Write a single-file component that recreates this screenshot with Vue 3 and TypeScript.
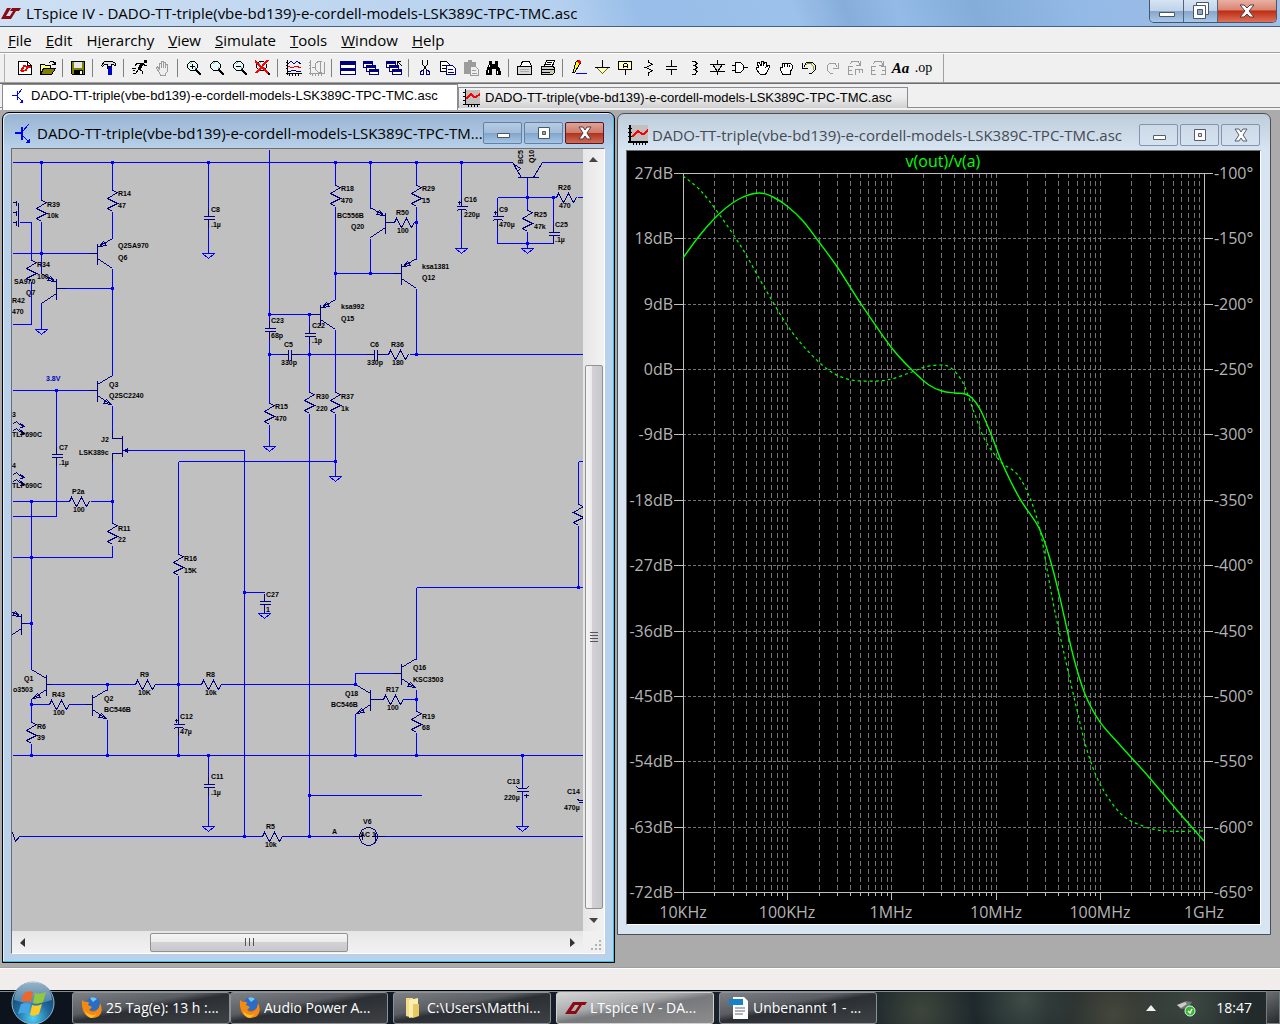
<script setup lang="ts">
interface Shape { d: string; f?: string; s?: string; w?: number }
interface Tool { name: string; art: Shape[] }
interface Label { x: number; y: number; t: string }

const fileName = 'DADO-TT-triple(vbe-bd139)-e-cordell-models-LSK389C-TPC-TMC.asc'
const shortName = fileName.slice(0, -5) + '...'

const menus = [
  ['', 'F', 'ile'], ['', 'E', 'dit'], ['H', 'i', 'erarchy'], ['', 'V', 'iew'],
  ['', 'S', 'imulate'], ['', 'T', 'ools'], ['', 'W', 'indow'], ['', 'H', 'elp'],
]

const K = '#000', N = '#000080', G = '#9c9c9c'
const lens: Shape[] = [
  { d: 'M4.5 1.5h4l3 3v3l-3 3h-4l-3-3v-3z', f: '#e8f8f8', s: K },
  { d: 'M4 4l2-2M9 9l1-2', s: '#3cc' },
  { d: 'M10 10l5 5', s: K, w: 2 },
]
const graph = (c: string): Shape[] => [{ d: 'M1.5 0v15M0 13.5h16M3.5 13v3M6.5 13v3M9.5 13v3M12.5 13v3M0 2.5h2M0 5.5h2M0 8.5h2', s: c }]
const panes: Shape[] = [
  { d: 'M.5 1.5h9v6h-9z', f: '#fff', s: N }, { d: 'M0 2.5h10', s: N, w: 2 },
  { d: 'M3.5 5.5h9v6h-9z', f: '#fff', s: N }, { d: 'M3 6.5h10', s: N, w: 2 },
  { d: 'M6.5 9.5h9v5h-9z', f: '#fff', s: N }, { d: 'M6 10.5h10', s: N, w: 2 },
]

const toolGroups: Tool[][] = [
  [
    { name: 'New schematic', art: [{ d: 'M1.5 1.5h9l4 4v9h-13z', f: '#fff', s: K }, { d: 'M10.5 1.5v4h4', s: K }, { d: 'M4 11l3-5h2M4 11h3M8 11l3-4h3M9 7h4', s: '#e00', w: 2 }] },
    { name: 'Open', art: [{ d: 'M.5 14V4.5h4l1 1h5v3', f: '#ffff80', s: K }, { d: 'M.5 14.5l3-6h12l-4 6z', f: '#808000', s: K }, { d: 'M9 3l2-2h2l2 3M12 4.5h3v-3', s: K }] },
  ],
  [{ name: 'Save', art: [{ d: 'M1.5 1.5h13v13h-12l-1-1z', f: '#808000', s: K }, { d: 'M4 2h8v6H4z', f: '#e6e6e6' }, { d: 'M4 10h9v5H4z', f: K }, { d: 'M10 11h2v3h-2z', f: '#fff' }] }],
  [{ name: 'Control panel', art: [{ d: 'M.5 5.5l3-4h8l3 2v2l-3-1h-1v2h-4v-2h-3l-2 2z', f: '#e0e0e0', s: K }, { d: 'M7 7h4v8H7z', f: '#00c' }, { d: 'M6.5 6v3', s: K }] }],
  [
    { name: 'Run', art: [{ d: 'M12 0h3v3h-3z', f: K }, { d: 'M10 4L7 9', s: K, w: 3 }, { d: 'M7 9l3 2v3M7 9l-3 4H1M4 3.5h7l2 2h2M5 3L3 6', s: K }, { d: 'M0 8.5h4M1 10.5h2', s: K }] },
    { name: 'Halt', art: [{ d: 'M4.5 13l-3-5 1-1 2 2V3.5h2V8 1.5h2V8 2.5h2V8 4.5h2V11l-2 3v1h-5z', f: '#eee', s: G }] },
  ],
  [
    { name: 'Zoom in', art: [...lens, { d: 'M4 6.5h5M6.5 4v5', s: K }] },
    { name: 'Zoom area', art: lens },
    { name: 'Zoom out', art: [...lens, { d: 'M4 6.5h5', s: K }] },
    { name: 'Zoom to fit', art: [...lens, { d: 'M0 1l13 12M13 0L1 13', s: '#f00', w: 2 }] },
  ],
  [
    { name: 'Autorange', art: [...graph(K), { d: 'M2 4l3-3 3 3 3-3 4 3', s: N }, { d: 'M2 6l4 2 4-2 5 2', s: '#f00' }, { d: 'M2 11h3l2-1 3 1h5', s: N }] },
    { name: 'Plot settings', art: [...graph(G), { d: 'M13 1.5h-4L6 4v5l3 3h4M11.5 1v12M3 7.5h4M15 1.5v11', s: G }] },
  ],
  [
    { name: 'Tile windows', art: [{ d: 'M.5 1.5h15v13H.5z', f: '#fff', s: N }, { d: 'M0 3h16M0 9h16', s: N, w: 3 }] },
    { name: 'Cascade windows', art: panes },
    { name: 'Close all windows', art: [...panes, { d: 'M11.5 5V1.5H15M12 2l4 4', s: K }] },
  ],
  [
    { name: 'Cut', art: [{ d: 'M5.5 0v4l4 6M10.5 0v4l-4 6', s: K }, { d: 'M4.5 10.5h2v4h-3v-2zM9.500 10.5h2l1 2v2h-3z', s: N }] },
    { name: 'Copy', art: [{ d: 'M.5 1.5h6l3 3v7h-9z', f: '#fff', s: K }, { d: 'M2 5.5h4M2 8.5h5', s: K }, { d: 'M6.5 5.5h6l3 3v6h-9z', f: '#fff', s: N }, { d: 'M8 9.5h5M8 12h6', s: N }] },
    { name: 'Paste', art: [{ d: 'M1 2h4V0h4v2h4v12H1z', f: G }, { d: 'M7.5 6.5h5l3 3v6h-8z', f: '#eee', s: G }, { d: 'M9 10.5h4M9 13h5', s: G }] },
    { name: 'Find', art: [{ d: 'M3 1h3v3h3V1h3v3l3 8v3h-5V9H6v6H0v-4l3-7z', f: K }, { d: 'M3.5 5v2M2 10v3M12 5v2M11.5 11v3', s: '#fff' }] },
  ],
  [
    { name: 'Print setup', art: [{ d: 'M3.5 6l2-4.500h7l2 4.5', f: '#fff', s: K }, { d: 'M.5 6.5h14v8H.5z', f: '#d8d8d8', s: K }, { d: 'M3 9h9M3 11h9', s: '#aaa' }] },
    { name: 'Print', art: [{ d: 'M4.5 6l2-5.500h8l-2 5.500z', f: '#fff', s: K }, { d: 'M7 2.5h5M6 4.5h5', s: K }, { d: 'M1.5 6.5h12l1 2v4l-2 2h-11z', f: '#ccc', s: K }, { d: 'M2 9.5h12M2 12h8', s: K }, { d: 'M10 11h2v1h-2z', f: '#cc0' }] },
  ],
  [
    { name: 'Draw wire', art: [{ d: 'M2 12L5 2l2-2 3 2-6 10z', f: '#ff0', s: K }, { d: 'M6 1l2-1 2 2-2 2z', f: '#f00' }, { d: 'M2 12l3-1-2 3z', f: K }, { d: 'M5 13.5h11', s: '#00f' }] },
    { name: 'Place ground', art: [{ d: 'M8.5 0v7', s: K }, { d: 'M2.5 7.5h12l-6 6z', f: '#ffffc0', s: '#660' }, { d: 'M1 7.5h15', s: K }] },
    { name: 'Label net', art: [{ d: 'M1.5 1.5h13v8h-13z', f: '#ffffc0', s: K }, { d: 'M6.5 8V4.500l1-1h2l1 1V8M6 6.5h4M8.5 10v5', s: K }] },
    { name: 'Resistor', art: [{ d: 'M8.5 0v2l4 2.5-7 3 7 3-4 2.5v3', s: K }] },
    { name: 'Capacitor', art: [{ d: 'M8.5 0v6M3 6.5h11M3 9.5h11M8.5 10v5', s: K }] },
    { name: 'Inductor', art: [{ d: 'M6 1.5h3l2 2-2 2H7h2l2 2-2 2H7h2l2 2-2 3H6', s: K }] },
    { name: 'Diode', art: [{ d: 'M8.5 0v15M1 4.5h15M1 11.5h15', s: K }, { d: 'M3.5 4.5h10l-5 7z', f: '#ddd', s: K }] },
    { name: 'Component', art: [{ d: 'M3.5 2.5h5l3 3v4l-3 3h-5z', f: '#fff', s: K }, { d: 'M0 5.5h3M0 10.5h3M12 7.5h4', s: K }] },
    { name: 'Move', art: [{ d: 'M5 14L1 9V7h2l1 1-2-5 2-1 2 4V1h2v5l2-4 2 1-1 4 3-2 1 1-3 6-2 3z', f: '#fff', s: K }] },
    { name: 'Drag', art: [{ d: 'M4 13L2 9V7h2V4l2-1 1 1 1-1 2 1 2-1 2 2v4l-2 3v2H4z', f: '#fff', s: K }, { d: 'M6.5 4v3M9 4v3M11.5 5v2', s: K }] },
    { name: 'Undo', art: [{ d: 'M3 7l2-4 3-1h3l3 3v5l-3 3H8M1.5 3v5H7', s: K }, { d: 'M5 5l2-1.500h3l2.500 3v3', s: '#990' }] },
    { name: 'Redo', art: [{ d: 'M13 7l-2-4H6L3 6v4l3 3h3M14.5 3v5H9', s: G }] },
    { name: 'Rotate', art: [{ d: 'M3 4l2-2.500h6l2 3M13.5 1v4H9M1.5 6v9M1 6.5h5M1 10.5h4M1 14.5h5M8.5 9v6M8 9.5h8M12 9v4M15.5 9v4', s: G }] },
    { name: 'Mirror', art: [{ d: 'M3 4l2-2.500h6l2 3M13.5 1v4H9M1.5 6v9M1 6.5h5M1 10.5h4M1 14.5h5M15.5 6v9M16 6.5h-5M16 10.5h-4M16 14.5h-5', s: G }] },
  ],
]

/* ---- schematic symbols ---- */
const rv = (x: number, y: number) => `M${x} ${y}l5 2l-10 6l10 5l-10 5l5 3`
const rh = (x: number, y: number) => `M${x} ${y}l2 -4l5 9l5 -9l5 9l3 -5`
const cv = (x: number, y: number) => `M${x - 5} ${y}h11m-11 3h11M${x} ${y - 8}v8M${x} ${y + 3}v8`
const ch = (x: number, y: number) => `M${x} ${y - 5}v11m3 -11v11M${x - 8} ${y}h8M${x + 3} ${y}h8`
const pol = (x: number, y: number) => `M${x - 5} ${y}h11M${x - 5} ${y + 5}l2 -2h7l2 2M${x - 4} ${y - 4}h4m-2 -2v4M${x} ${y - 8}v8M${x} ${y + 3}v8`
const gnd = (x: number, y: number) => `M${x - 6} ${y}h12l-6 5z`
type Arrow = 'pTop' | 'nBottom'
const tr = (x: number, y: number, d: number, a: Arrow) => {
  const body = `M${x} ${y - 10}v21M${x} ${y - 6}L${x + 15 * d} ${y - 15}M${x} ${y + 5}L${x + 15 * d} ${y + 15}`
  const head = a === 'pTop'
    ? `M${x + 2 * d} ${y - 7}l${4 * d} -5l${3 * d} 4z`
    : `M${x + 14 * d} ${y + 14}l${-8 * d} -1l${3 * d} -4z`
  return body + head
}

const wires = [
  'M12 162H512M542 162H583M41 162V200M41 221V273M41 303V329M112 162V190M112 211V238M112 268V375M208 162V216M208 219V253',
  'M12 253H88M65 288H112M19 222H31V260M31 281V324H12M269 149V328M269 331V403M269 424V446M269 314H310M309 314V333M309 336V392',
  'M309 413V836M335 162V185M335 206V299M335 329V392M335 413V476M335 273H392M370 162V208M370 238V273M416 162V185M416 206V259',
  'M416 288V354M461 162V206M461 209V248M527 177V210M527 231V248M497 197H556M577 197H583M497 197V216M497 219V243H553V235M553 197V232',
  'M269 354H283M294 354H370M380 354H388M409 354H583M12 390H88M56 390V454M56 457V516H12M112 405V430M112 462V523M112 545V557H12',
  'M12 501H69M90 501H112M31 501V669M128 450H244V836M244 592H264M178 461H335M178 461V554M178 575V724M178 727V755M51 684H135',
  'M155 684H201M221 684H355V673H392M31 699V722M31 743V755M31 704H49M69 704H84M107 684V690M107 719V755M12 755H583M208 755V784M208 787V826',
  'M19 836H262M282 836H352M384 836H583M309 795H421M416 587V659M416 587H583M416 689V711M416 732V755M403 699H416M355 714V755',
  'M578 461H583M578 461V504M578 525V587M522 755V788M522 791V826M26 623H31M414 222H416',
  gnd(41, 329), gnd(208, 253), gnd(461, 248), gnd(527, 248), gnd(269, 446), gnd(335, 476), gnd(264, 613), gnd(208, 826), gnd(522, 826),
].join('')

const parts = [
  rv(41, 200), rv(112, 190), rv(31, 260), rv(335, 185), rv(416, 185), rv(527, 210), rv(269, 403), rv(309, 392), rv(335, 392),
  rv(112, 523), rv(178, 554), rv(31, 722), rv(416, 711), rv(578, 504),
  rh(394, 222), rh(556, 197), rh(388, 354), rh(69, 501), rh(49, 704), rh(135, 684), rh(201, 684), rh(383, 699), rh(262, 836),
  cv(208, 216), cv(553, 232), cv(269, 328), cv(309, 333), cv(56, 454), cv(208, 784), cv(264, 601), ch(288, 354), ch(374, 354),
  pol(461, 206), pol(497, 216), pol(178, 724),
  tr(97, 253, 1, 'pTop'), tr(56, 288, -1, 'pTop'), tr(385, 222, -1, 'pTop'), tr(401, 273, 1, 'pTop'), tr(320, 314, 1, 'pTop'),
  tr(97, 390, 1, 'nBottom'), tr(46, 684, -1, 'nBottom'), tr(92, 704, 1, 'nBottom'), tr(401, 673, 1, 'nBottom'), tr(370, 699, -1, 'nBottom'),
  tr(21, 623, -1, 'pTop'),
  'M88 253H97M56 288H65M385 222H394M392 273H401M310 314H320M88 390H97M46 684H51M84 704H92M392 673H401M370 699H383M21 623H26',
  'M517 177H538M512 162L521 177M533 177L542 162M514 164l6 4l-3 3z',
  'M12 202H16M12 212H16M12 222H16M16 200V205M16 210V215M16 220V225M18 202V226',
  'M112 430V438H122M122 435V456M122 453H112V462M122 450H128M124 450l3 -2v4z',
  'M13 423l3 -2l3 3l5 2M13 430l3 -2l3 3l4 1M20 423l4 3l-4 1M19 429l5 4l-4 1M13 474l3 -2l3 3l5 2M13 481l3 -2l3 3l4 1M20 474l4 3l-4 1M19 480l5 4l-4 1',
  'M12 832L15 841L19 836M516 791H528M516 786l2 2h8l2 -2M523 795h5m-2 -2v4M577 799l2 1h4M578 802H583',
  'M352 836H362M362 833v6M371 836H384M375 832v8',
].join('')

const dots = [
  [41, 162], [112, 162], [208, 162], [335, 162], [370, 162], [416, 162], [461, 162], [41, 253], [112, 288], [527, 197], [553, 197],
  [527, 243], [416, 222], [335, 273], [370, 273], [269, 314], [309, 314], [269, 354], [309, 354], [416, 354], [56, 390], [335, 461],
  [31, 501], [112, 501], [31, 557], [31, 623], [244, 592], [578, 587], [107, 684], [178, 684], [355, 684], [416, 699], [31, 704],
  [31, 755], [107, 755], [178, 755], [208, 755], [355, 755], [416, 755], [522, 755], [309, 795], [244, 836], [309, 836],
]

const pairs: [string, number, number, string, number, number][] = [
  ['R39', 47, 207, '10k', 47, 218], ['R14', 118, 196, '47', 118, 208], ['C8', 211, 212, '.1µ', 211, 227],
  ['Q2SA970', 118, 248, 'Q6', 118, 260], ['R34', 37, 267, '100', 37, 279], ['SA970', 14, 284, 'Q7', 26, 295],
  ['R42', 12, 303, '470', 12, 314], ['C23', 271, 323, '68p', 271, 338], ['C5', 284, 347, '330p', 281, 365],
  ['R18', 341, 191, '470', 341, 203], ['BC556B', 337, 218, 'Q20', 351, 229], ['R50', 396, 215, '100', 397, 233],
  ['R29', 422, 191, '15', 422, 203], ['C16', 464, 202, '220µ', 464, 217], ['C9', 499, 212, '470µ', 499, 227],
  ['R25', 534, 217, '47k', 534, 229], ['C25', 555, 227, '.1µ', 555, 242], ['R26', 558, 190, '470', 559, 208],
  ['ksa1381', 422, 269, 'Q12', 422, 280], ['ksa992', 341, 309, 'Q15', 341, 321], ['C22', 312, 328, '.1p', 312, 343],
  ['C6', 370, 347, '330p', 367, 365], ['R36', 391, 347, '180', 392, 365], ['Q3', 109, 387, 'Q2SC2240', 109, 398],
  ['3', 12, 417, 'TLP690C', 12, 437], ['4', 12, 468, 'TLP690C', 12, 488], ['C7', 59, 450, '.1µ', 59, 465],
  ['J2', 101, 442, 'LSK389c', 79, 455], ['P2a', 72, 494, '100', 73, 512], ['R11', 118, 531, '22', 118, 542],
  ['R15', 275, 409, '470', 275, 421], ['R30', 316, 399, '220', 316, 411], ['R37', 341, 399, '1k', 341, 411],
  ['R16', 184, 561, '15K', 184, 573], ['C27', 266, 597, '1', 266, 612], ['Q1', 24, 681, 'o3503', 13, 692],
  ['R9', 140, 677, '10K', 138, 695], ['R8', 206, 677, '10k', 205, 695], ['R43', 52, 697, '100', 53, 715],
  ['Q2', 104, 701, 'BC546B', 104, 712], ['R6', 37, 729, '39', 37, 740], ['C12', 180, 719, '47µ', 180, 734],
  ['C11', 211, 779, '.1µ', 211, 795], ['R5', 266, 829, '10k', 265, 847], ['Q16', 413, 670, 'KSC3503', 413, 682],
  ['Q18', 345, 696, 'BC546B', 331, 707], ['R17', 386, 692, '100', 387, 710], ['R19', 422, 719, '68', 422, 730],
  ['C13', 507, 784, '220µ', 504, 800], ['C14', 567, 794, '470µ', 564, 810], ['V6', 363, 824, 'AC 1', 360, 837],
]
const labels: Label[] = pairs.flatMap(([a, ax, ay, b, bx, by]) => [{ t: a, x: ax, y: ay }, { t: b, x: bx, y: by }])
labels.push({ t: 'A', x: 332, y: 834 })

/* ---- waveform ---- */
const left = 683, right = 1204, top = 173, bottom = 892
const decade = (right - left) / 5
const row = (bottom - top) / 11
const gridX: number[] = []
for (let k = 0; k < 5; k++) for (let m = 1; m < 10; m++) if (k + m > 1) gridX.push(Math.round(left + decade * (k + Math.log10(m))))
const rows = Array.from({ length: 12 }, (_, i) => ({ y: Math.round(top + row * i), db: `${27 - 9 * i}dB`, deg: `${-100 - 50 * i}°` }))
const freqs = ['10KHz', '100KHz', '1MHz', '10MHz', '100MHz', '1GHz'].map((t, i) => ({ t, x: Math.round(left + decade * i) }))

const smooth = (p: number[][]) => {
  let d = `M${p[0][0]} ${p[0][1]}`
  for (let i = 0; i < p.length - 1; i++) {
    const a = p[i - 1] ?? p[i], b = p[i], c = p[i + 1], e = p[i + 2] ?? c
    d += `C${b[0] + (c[0] - a[0]) / 6} ${b[1] + (c[1] - a[1]) / 6} ${c[0] - (e[0] - b[0]) / 6} ${c[1] - (e[1] - b[1]) / 6} ${c[0]} ${c[1]}`
  }
  return d
}
const gain = smooth([[683, 258], [700, 235], [719, 214], [739, 199], [759, 193], [773, 197], [787, 206], [803, 221], [819, 242], [838, 268], [861, 304], [891, 347], [912, 370], [929, 385], [942, 391], [955, 393], [965, 394], [972, 398], [980, 409], [991, 434], [1003, 465], [1020, 499], [1039, 528], [1050, 559], [1060, 598], [1073, 655], [1085, 694], [1100, 722], [1120, 745], [1148, 776], [1176, 809], [1204, 841]])
const phase = smooth([[683, 176], [700, 190], [719, 214], [742, 248], [763, 285], [787, 325], [806, 349], [827, 369], [844, 378], [861, 381], [887, 380], [912, 372], [925, 367], [940, 365], [951, 368], [963, 383], [974, 412], [985, 440], [1001, 462], [1017, 474], [1030, 498], [1040, 530], [1047, 569], [1055, 612], [1066, 662], [1077, 710], [1087, 750], [1100, 784], [1120, 813], [1140, 825], [1165, 831], [1204, 831]])

const tasks = [
  { icon: 'fox', text: '25 Tag(e): 13 h :...' },
  { icon: 'fox', text: 'Audio Power A...' },
  { icon: 'folder', text: 'C:\\Users\\Matthi...' },
  { icon: 'app', text: 'LTspice IV - DA...' },
  { icon: 'doc', text: 'Unbenannt 1 - ...' },
]
</script>

<template>
  <div class="desktop">
    <header class="titlebar">
      <svg class="logo" width="20" height="12" viewBox="0 0 20 12" aria-hidden="true">
        <path d="M6 0h4L5 8h4l-2 3H0zM11 0h9l-2 3h-3l-5 8H7l5-8H9z" fill="#8b0a14" />
      </svg>
      <h1>LTspice IV - {{ fileName }}</h1>
      <div class="sys">
        <button type="button" aria-label="Minimize"><svg width="18" height="18" viewBox="0 0 18 18"><path d="M1.5 10.5h15v4h-15z" fill="#fff" stroke="#4a5568" /></svg></button>
        <button type="button" aria-label="Restore"><svg width="18" height="18" viewBox="0 0 18 18"><path d="M4.5 .5h12v12h-12z" fill="#fff" stroke="#4a5568" /><path d="M1.5 3.5h12v13h-12z" fill="#fff" stroke="#4a5568" /><path d="M5.5 7.5h5v5h-5z" fill="#8fabcb" stroke="#4a5568" /></svg></button>
        <button type="button" class="close" aria-label="Close"><svg width="18" height="18" viewBox="0 0 18 18"><path d="M2 3h4l3 3 3-3h4l-5 6 5 6h-4l-3-3-3 3H2l5-6z" fill="#fff" stroke="#543a45" /></svg></button>
      </div>
    </header>

    <nav class="menubar" aria-label="Menu">
      <button v-for="m in menus" :key="m.join('')" type="button">{{ m[0] }}<u>{{ m[1] }}</u>{{ m[2] }}</button>
    </nav>

    <div class="toolbar" role="toolbar" aria-label="Tools">
      <div v-for="(g, gi) in toolGroups" :key="gi" class="group">
        <button v-for="t in g" :key="t.name" type="button" :aria-label="t.name">
          <svg width="16" height="16" viewBox="0 0 16 16" shape-rendering="crispEdges">
            <path v-for="(s, i) in t.art" :key="i" :d="s.d" :fill="s.f ?? 'none'" :stroke="s.s ?? 'none'" :stroke-width="s.w ?? 1" />
          </svg>
        </button>
        <template v-if="gi === toolGroups.length - 1">
          <button type="button" class="aa">Aa</button>
          <button type="button" class="op">.op</button>
        </template>
      </div>
    </div>

    <div class="tabs" role="tablist">
      <button type="button" role="tab" aria-selected="true" class="tab on">
        <svg width="18" height="18" viewBox="0 0 18 18" shape-rendering="crispEdges"><path d="M5 8.500h5M10.500 4v9M11 7l4-5M11 10l4 4" fill="none" stroke="#00f" /><path d="M16 16h-4l4-4z" fill="#00f" /></svg>
        {{ fileName }}
      </button>
      <button type="button" role="tab" aria-selected="false" class="tab">
        <svg width="18" height="18" viewBox="0 0 18 18" shape-rendering="crispEdges"><path d="M2 1h15v14H2z" fill="#c0c0c0" /><path d="M2.5 0v16M0 15.5h17M0 3.5h2M0 7.5h2M0 11.5h2M5.5 15v3M8.5 15v3M11.5 15v3M14.5 15v3" stroke="#000" /><path d="M3 10l5-5 3 3h2l4-3" fill="none" stroke="#f00" stroke-width="2" /></svg>
        {{ fileName }}
      </button>
    </div>

    <main class="mdi">
      <section class="win active">
        <header>
          <svg width="20" height="20" viewBox="0 0 20 20" shape-rendering="crispEdges"><path d="M2 10h6M9 4v13" fill="none" stroke="#00f" stroke-width="2" /><path d="M10 8l6-7M10 13l5 5" fill="none" stroke="#00f" /><path d="M17 20h-5l5-5z" fill="#00f" /></svg>
          <h2>{{ shortName }}</h2>
          <button type="button" aria-label="Minimize"><svg width="16" height="16" viewBox="0 0 16 16"><path d="M2.5 8.5h12v4h-12z" fill="#fff" stroke="#4a5568" /></svg></button>
          <button type="button" aria-label="Maximize"><svg width="16" height="16" viewBox="0 0 16 16"><path d="M2.5 2.5h11v11h-11z" fill="#fff" stroke="#4a5568" /><path d="M6.5 6.5h3v3h-3z" fill="#9ab" stroke="#4a5568" /></svg></button>
          <button type="button" class="close" aria-label="Close"><svg width="16" height="16" viewBox="0 0 16 16"><path d="M2 2h4l2 3 2-3h4l-4 6 4 6h-4l-2-3-2 3H2l4-6z" fill="#fff" stroke="#543a45" /></svg></button>
        </header>
        <div class="body sheet">
          <div class="canvas">
            <svg width="571" height="782" viewBox="12 149 571 782" shape-rendering="crispEdges">
              <g transform="translate(.5 .5)" fill="none">
                <path :d="wires" stroke="#00f" />
                <path :d="parts" stroke="#000080" />
                <circle cx="368" cy="836" r="9" stroke="#000080" />
              </g>
              <rect v-for="(d, i) in dots" :key="i" :x="d[0] - 1" :y="d[1] - 1" width="3" height="3" fill="#00f" />
              <g class="net">
                <text v-for="(l, i) in labels" :key="i" :x="l.x" :y="l.y">{{ l.t }}</text>
                <text transform="translate(523 164) rotate(-90)">BC5</text>
                <text transform="translate(534 163) rotate(-90)">Q10</text>
                <text class="volt" x="46" y="381">3.8V</text>
              </g>
            </svg>
          </div>
          <div class="vbar">
            <svg width="9" height="5" viewBox="0 0 9 5"><path d="M0 5l4-5 5 5z" fill="#444" /></svg>
            <div class="vthumb"><i></i><i></i><i></i><i></i></div>
            <svg width="9" height="5" viewBox="0 0 9 5"><path d="M0 0l5 5 4-5z" fill="#444" /></svg>
          </div>
          <div class="hbar">
            <svg width="5" height="9" viewBox="0 0 5 9"><path d="M5 0L0 5l5 4z" fill="#333" /></svg>
            <div class="hthumb"><i></i><i></i><i></i></div>
            <svg width="5" height="9" viewBox="0 0 5 9"><path d="M0 0l5 5-5 4z" fill="#333" /></svg>
          </div>
          <div class="grip">
            <svg width="12" height="12" viewBox="0 0 12 12"><path d="M9 1h2v2H9zM9 5h2v2H9zM5 5h2v2H5zM9 9h2v2H9zM5 9h2v2H5zM1 9h2v2H1z" fill="#b0b0b0" /></svg>
          </div>
        </div>
      </section>

      <section class="win">
        <header>
          <svg width="20" height="20" viewBox="0 0 20 20" shape-rendering="crispEdges"><path d="M2 0h18v18H2z" fill="#c0c0c0" /><path d="M2 0v18M0 17h20" stroke="#000" stroke-width="2" /><path d="M0 3.5h4M0 7.5h4M0 11.5h4M5.5 17v3M8.5 17v3M11.5 17v3M14.5 17v3M17.5 17v3" stroke="#000" /><path d="M4 12l6-6 4 3h2l4-4" fill="none" stroke="#f00" stroke-width="2" /></svg>
          <h2>{{ fileName }}</h2>
          <button type="button" aria-label="Minimize"><svg width="16" height="16" viewBox="0 0 16 16"><path d="M2.5 8.5h12v4h-12z" fill="#fff" stroke="#565c6c" /></svg></button>
          <button type="button" aria-label="Maximize"><svg width="16" height="16" viewBox="0 0 16 16"><path d="M2.5 2.5h11v11h-11z" fill="#fff" stroke="#565c6c" /><path d="M6.5 6.5h3v3h-3z" fill="#dde" stroke="#565c6c" /></svg></button>
          <button type="button" aria-label="Close"><svg width="16" height="16" viewBox="0 0 16 16"><path d="M2 2h4l2 3 2-3h4l-4 6 4 6h-4l-2-3-2 3H2l4-6z" fill="#fff" stroke="#565c6c" /></svg></button>
        </header>
        <div class="body plot">
          <svg viewBox="627 151 633 773">
            <g transform="translate(.5 .5)" shape-rendering="crispEdges" fill="none">
              <path v-for="x in gridX" :key="x" :d="`M${x} ${top}V${bottom}`" stroke="#747474" stroke-dasharray="5 3" />
              <path v-for="r in rows.slice(1, -1)" :key="r.y" :d="`M${left} ${r.y}H${right}`" stroke="#747474" stroke-dasharray="3 2" />
              <path v-for="x in gridX" :key="'t' + x" :d="`M${x} ${bottom}v4`" stroke="#c0c0c0" />
              <path v-for="f in freqs" :key="f.t" :d="`M${f.x} ${bottom}v8`" stroke="#c0c0c0" />
              <path v-for="r in rows" :key="'r' + r.y" :d="`M${left - 9} ${r.y}H${left}M${right} ${r.y}h9`" stroke="#c0c0c0" />
              <path :d="`M${left} ${top}H${right}V${bottom}H${left}z`" stroke="#c0c0c0" />
            </g>
            <g fill="none" stroke="#0f0">
              <path :d="gain" stroke-width="1.4" />
              <path :d="phase" stroke-dasharray="3 3" stroke-width="1.2" />
            </g>
            <g class="axis">
              <text v-for="r in rows" :key="r.db" x="673" :y="r.y + 6" text-anchor="end">{{ r.db }}</text>
              <text v-for="r in rows" :key="r.deg" x="1214" :y="r.y + 6">{{ r.deg }}</text>
              <text v-for="f in freqs" :key="f.t" :x="f.x" y="918" text-anchor="middle">{{ f.t }}</text>
              <text class="trace" x="943" y="167" text-anchor="middle">v(out)/v(a)</text>
            </g>
          </svg>
        </div>
      </section>
    </main>

    <div class="status"></div>

    <footer class="taskbar">
      <button type="button" class="orb" aria-label="Start">
        <svg width="46" height="44" viewBox="0 0 46 44">
          <defs>
            <radialGradient id="orb" cx="50%" cy="85%" r="80%"><stop offset="0" stop-color="#4fd0f5" /><stop offset=".5" stop-color="#20699c" /><stop offset="1" stop-color="#11395f" /></radialGradient>
            <linearGradient id="shine" x2="0" y2="1"><stop offset="0" stop-color="#d5e8f4" /><stop offset="1" stop-color="#5f93b8" /></linearGradient>
          </defs>
          <circle cx="23" cy="22" r="21" fill="url(#orb)" stroke="#8fb6cf" />
          <path d="M4 19a19 18 0 0 1 38 0q-19 7-38 0z" fill="url(#shine)" opacity=".7" />
          <path d="M14 12q5-3 9-1l-2 10q-5-2-10 0z" fill="#f0652a" />
          <path d="M25 12q5 2 11-1l-3 10q-5 3-10 1z" fill="#93c83e" />
          <path d="M11 23q5-2 10 0l-3 10q-5-2-10 0z" fill="#45a5e4" />
          <path d="M22 24q5 2 10-1l-3 10q-5 3-9 1z" fill="#fdc924" />
        </svg>
      </button>
      <div class="tasks">
        <button v-for="(t, i) in tasks" :key="i" type="button" :class="['task', { joined: i === 1, current: i === 3 }]">
          <svg v-if="t.icon === 'fox'" width="22" height="24" viewBox="0 0 22 24">
            <circle cx="11" cy="12" r="9" fill="#e76f0c" /><circle cx="12" cy="8" r="7" fill="#2b6cc4" /><path d="M9 2q4-2 7 1l-4 3z" fill="#7cc4f0" />
            <path d="M1 4l3 2 4 0-1 3 4 2-3 3q3 4 7 1 4-3 4-8 4 8-1 13-6 4-12 0Q0 15 1 4z" fill="#f58a13" /><path d="M4 15q5 6 12 3l-5 4q-5 0-7-7z" fill="#fcc02a" />
          </svg>
          <svg v-else-if="t.icon === 'folder'" width="22" height="24" viewBox="0 0 22 24"><path d="M4 2h7v20l-7-2z" fill="#f6dc83" /><path d="M7 4l9-2v17l-9 3z" fill="#fbeeb0" /><path d="M11 8h6v12l-6 2z" fill="#e9c860" /></svg>
          <svg v-else-if="t.icon === 'app'" width="22" height="24" viewBox="0 0 22 24"><path d="M8 6h4L6 15h4l-2 3H0zM12 6h10l-2 3h-3l-6 9H8l6-9h-4z" fill="#8b0a14" /></svg>
          <svg v-else width="22" height="24" viewBox="0 0 22 24"><path d="M5 1h11l4 4v18H5z" fill="#fff" /><path d="M1 3h14v6H1z" fill="#1583c7" /><path d="M7 12h10M7 15h10M7 18h8" stroke="#667" /></svg>
          <span>{{ t.text }}</span>
        </button>
      </div>
      <div class="tray">
        <svg width="10" height="6" viewBox="0 0 10 6"><path d="M0 6l5-6 5 6z" fill="#f0f0f0" /></svg>
        <svg width="20" height="18" viewBox="0 0 20 18"><path d="M1 6l9-4 6 1-4 6-7 1z" fill="#777" /><path d="M1 6l8-3 2 2-6 4z" fill="#ccc" /><circle cx="14" cy="12" r="5" fill="#3ab52c" stroke="#cfe" /><path d="M12 12l2 2 2-4" fill="none" stroke="#fff" stroke-width="1.5" /></svg>
        <time>18:47</time>
      </div>
      <button type="button" class="peek" aria-label="Show desktop"></button>
    </footer>
  </div>
</template>

<style>
body {
  margin: 0;
  background: #f0f0f0;
}
</style>

<style scoped>
.desktop {
  display: flex;
  flex-direction: column;
  min-height: 100vh;
  font: 15px/20px "Open Sans", "Noto Sans", sans-serif;
  color: #000;
  overflow: hidden;
}
* {
  box-sizing: border-box;
}
button {
  margin: 0;
  padding: 0;
  border: 0;
  background: none;
  font: inherit;
  color: inherit;
  white-space: nowrap;
}
svg {
  display: block;
  flex: none;
}
h1,
h2 {
  margin: 0;
  font: inherit;
  white-space: nowrap;
}

.titlebar {
  display: flex;
  align-items: flex-start;
  height: 27px;
  border-bottom: 1px solid #44617f;
  background: linear-gradient(70deg, #cfe0f3 0, #c2d8f0 20%, #b5d0ee 44%, #98bee9 50%, #9cc1ea 62%, #87aedb 66%, #94bbe7 70%, #84add9 76%, #93b9e6 84%, #a3c0e6 100%);
}
.logo {
  margin: 8px 0 0 1px;
}
.titlebar h1 {
  flex: 1;
  margin: 3px 0 0 5px;
}
.sys {
  display: flex;
  width: 128px;
  height: 23px;
  margin-right: 3px;
  border: 1px solid #46566c;
  border-top: 0;
  border-radius: 0 0 5px 5px;
  overflow: hidden;
}
.sys button {
  display: flex;
  flex: 34;
  justify-content: center;
  padding-top: 2px;
  border-right: 1px solid #52647c;
  background: linear-gradient(#d6e4f3 0, #bed2e8 50%, #86a5c8 51%, #aac8e8 100%);
}
.sys .close {
  flex: 59;
  border: 0;
  background: linear-gradient(#eab0a2 0, #d98572 45%, #bd2c12 50%, #dd7159 100%);
}

.menubar {
  display: flex;
  gap: 14px;
  height: 26px;
  padding: 0 8px;
  border-bottom: 1px solid #a0a0a0;
  background: #f0f0f0;
}

.toolbar {
  display: flex;
  height: 30px;
  border-top: 1px solid #fff;
  border-bottom: 1px solid #a0a0a0;
  background: #f0f0f0;
  padding-left: 4px;
}
.group {
  display: flex;
  align-items: center;
  padding-right: 8px;
  background: linear-gradient(#808080, #808080) no-repeat right 4px center / 1px 18px;
}
.group:first-child {
  padding-left: 8px;
  border-left: 1px solid #b0b0b0;
  margin-right: -1px;
}
.group:last-child {
  border-right: 1px solid #a0a0a0;
  background: none;
}
.group button {
  display: flex;
  justify-content: center;
  width: 23px;
}
.group .aa {
  font: italic bold 15px/18px "Liberation Serif", serif;
}
.group .op {
  font: 14px/18px "Liberation Serif", serif;
}

.tabs {
  display: flex;
  align-items: flex-start;
  height: 27px;
  padding-left: 2px;
  border-top: 1px solid #6d6d6d;
  background: linear-gradient(#8c8c96, #8c8c96) no-repeat 0 23px / 100% 1px, #f0f0f0;
  font: 13px/18px "Liberation Sans", Arial, sans-serif;
}
.tab {
  display: flex;
  flex: 0 1 450px;
  align-items: center;
  gap: 4px;
  height: 21px;
  margin-top: 3px;
  padding: 0 4px;
  border: 1px solid #8c8c96;
  border-bottom: 0;
  background: linear-gradient(#f2f2f2 0, #ebebeb 50%, #d0d0d0 100%);
}
.tab.on {
  flex-basis: 456px;
  gap: 6px;
  height: 26px;
  margin-top: 0;
  padding-bottom: 3px;
  background: #fff;
}

.mdi {
  display: flex;
  flex: 1;
  align-items: flex-start;
  gap: 2px;
  padding: 2px 9px 4px 2px;
  background: #ababab;
}
.win {
  flex: 654 1 0;
  min-width: 0;
  margin-top: 1px;
  border: 1px solid #4b4f55;
  border-radius: 7px 7px 0 0;
  background: linear-gradient(#bfcddb 0, #d7e4f2 36px);
  color: #444a52;
}
.win.active {
  flex-grow: 613;
  margin-top: 0;
  border-color: #000;
  background: linear-gradient(#98b4d2 0, #b9d1ea 36px);
  box-shadow: inset -1px -1px #3fc0dc, inset 1px 1px #e4effa;
  color: #000;
}
.win header {
  display: flex;
  align-items: center;
  gap: 2px;
  height: 36px;
  padding: 6px 10px 0 10px;
}
.win.active header {
  height: 35px;
  padding-top: 5px;
}
.win h2 {
  flex: 1;
  min-width: 0;
  padding-left: 2px;
}
.win header button {
  display: flex;
  flex: none;
  align-items: center;
  justify-content: center;
  width: 39px;
  height: 22px;
  border: 1px solid #8494b0;
  border-radius: 2px;
  background: linear-gradient(#ccd9e6, #d5e2ef);
}
.win.active header button {
  border-color: #6381a6;
  background: linear-gradient(#b5cce4 0, #a2bcd9 48%, #83a5c9 52%, #a5c5e5 100%);
}
.win.active header .close {
  border-color: #5c1620;
  background: linear-gradient(#dda498 0, #cf7b6c 48%, #ad3420 52%, #cf6b55 100%);
}
.body {
  margin: 0 9px 9px 8px;
  border: 1px solid #fff;
  border-top-color: #6d6d6d;
  border-left-color: #6d6d6d;
}
.active .body {
  margin-bottom: 8px;
}
.sheet {
  display: grid;
  grid-template-columns: 1fr 21px;
  grid-template-rows: auto 22px;
}
.canvas {
  min-width: 0;
  overflow: hidden;
  background: #c0c0c0;
}
.net {
  font: bold 7px "Liberation Sans", Arial, sans-serif;
  fill: #000;
}
.net .volt {
  fill: #0000c0;
}
.vbar {
  display: flex;
  flex-direction: column;
  align-items: center;
  padding: 8px 1px;
  background: linear-gradient(90deg, #e6e6e6, #f2f2f2);
}
.vthumb {
  display: flex;
  flex-direction: column;
  align-items: center;
  justify-content: center;
  gap: 2px;
  flex: 1;
  width: 18px;
  margin: 203px 0 9px;
  border: 1px solid #929292;
  border-radius: 2px;
  background: linear-gradient(90deg, #f5f5f5 0, #ececec 35%, #d2d2d6 40%, #c8c8cc 100%);
}
.vthumb i {
  width: 8px;
  height: 1px;
  background: #555;
}
.hbar {
  display: flex;
  align-items: center;
  padding: 0 8px;
  background: linear-gradient(#e6e6e6, #f2f2f2);
}
.hthumb {
  display: flex;
  align-items: center;
  justify-content: center;
  gap: 3px;
  width: 198px;
  height: 19px;
  margin: 0 auto 0 125px;
  border: 1px solid #929292;
  border-radius: 2px;
  background: linear-gradient(#f5f5f5 0, #ececec 45%, #d2d2d6 50%, #c8c8cc 100%);
}
.hthumb i {
  width: 1px;
  height: 8px;
  background: #555;
}
.grip {
  display: flex;
  align-items: flex-end;
  justify-content: flex-end;
  padding: 2px;
  background: #f0f0f0;
}
.plot {
  background: #000;
}
.plot svg {
  width: 100%;
}
.axis {
  font: 16px "Open Sans", "Noto Sans", sans-serif;
  fill: #b4b4b4;
}
.axis .trace {
  fill: #0f0;
}

.status {
  height: 23px;
  border-top: 1px solid #a0a0a0;
  background: #f0edec;
  box-shadow: inset 0 1px #fff;
}

.taskbar {
  display: flex;
  height: 34px;
  border-top: 1px solid #000;
  background:
    radial-gradient(circle at 72% 60%, rgba(95, 100, 75, .5), transparent 6%),
    radial-gradient(circle at 80% 30%, rgba(95, 110, 95, .5), transparent 5%),
    radial-gradient(circle at 87% 70%, rgba(105, 100, 75, .5), transparent 6%),
    radial-gradient(circle at 93% 40%, rgba(95, 110, 95, .45), transparent 5%),
    linear-gradient(90deg, #0c131c 0, #15202b 50%, #1c272c 70%, #232b2b 100%);
  box-shadow: inset 0 1px #7d9096;
  color: #fff;
  font-size: 14px;
}
.orb {
  width: 46px;
  margin: -10px 16px 0 10px;
}
.tasks {
  display: flex;
  flex: 1;
  gap: 5px;
}
.task {
  display: flex;
  align-items: center;
  gap: 3px;
  width: 158px;
  height: 32px;
  margin-top: 1px;
  padding-left: 8px;
  border: 1px solid #8d9195;
  border-radius: 3px;
  background: linear-gradient(170deg, #7d8084 0, #5a5d61 38%, #2b2f34 50%, #3e4144 100%);
}
.task.joined {
  margin-left: -5px;
}
.task.current {
  background: linear-gradient(170deg, #d4d5d7 0, #a8a9ab 38%, #77797c 52%, #8e8c8d 100%);
  border-color: #d0d0d0;
}
.tray {
  display: flex;
  align-items: center;
  gap: 20px;
  padding-right: 14px;
}
.peek {
  width: 14px;
  border: 1px solid #767d80;
  background: linear-gradient(150deg, #6b6f71, #25292b);
}
</style>
